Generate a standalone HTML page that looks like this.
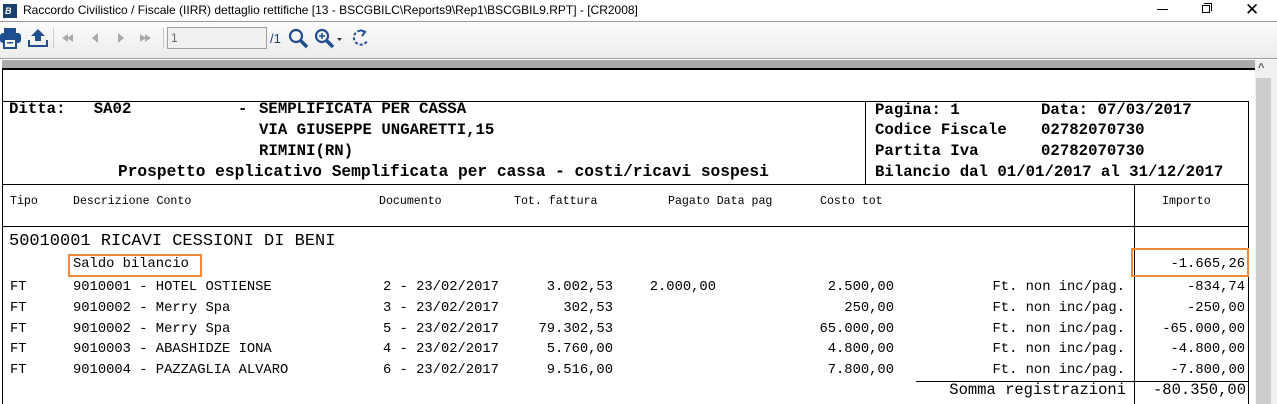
<!DOCTYPE html>
<html><head><meta charset="utf-8"><style>
*{margin:0;padding:0;box-sizing:border-box}
body{width:1277px;height:404px;overflow:hidden;background:#fff;position:relative;font-family:"Liberation Mono",monospace;color:#000}
.a{position:absolute;white-space:pre;line-height:16px}
.r{text-align:right}
.l{position:absolute;background:#000}
.t{font-size:13.8px}
.h{font-size:15.7px;font-weight:bold}
.c{font-size:11.6px}
</style></head><body>
<div style="position:absolute;left:0;top:0;width:1277px;height:21px;background:#fff"></div>
<div style="position:absolute;left:3px;top:4px;width:14px;height:14px;background:#1d3f6e;color:#fff;font:italic bold 9px 'Liberation Sans',sans-serif;line-height:14px;padding-left:2px">B</div>
<div class="a" style="left:23px;top:2px;font:12px 'Liberation Sans',sans-serif;line-height:16px">Raccordo Civilistico / Fiscale (IIRR) dettaglio rettifiche [13 - BSCGBILC\Reports9\Rep1\BSCGBIL9.RPT] - [CR2008]</div>
<div class="l" style="left:1157px;top:9px;width:11px;height:1px"></div>
<div style="position:absolute;left:1202px;top:5px;width:8px;height:8px;border:1px solid #000"></div>
<div style="position:absolute;left:1204px;top:3px;width:8px;height:8px;border-top:1px solid #000;border-right:1px solid #000"></div>
<div class="a" style="left:1245px;top:0px;font:17px 'Liberation Sans',sans-serif;line-height:20px">✕</div>
<div style="position:absolute;left:0;top:21px;width:1277px;height:38px;background:linear-gradient(#fbfbfb,#ececec);border-top:1px solid #9a9a9a;border-bottom:1px solid #9a9a9a"></div>
<svg style="position:absolute;left:0;top:26px" width="380" height="26">
<g fill="#1f4f8f"><rect x="4" y="2" width="12" height="5"/><rect x="0" y="7" width="21" height="10" rx="3"/><rect x="4" y="13" width="12" height="9" fill="#fff" stroke="#1f4f8f" stroke-width="2"/><rect x="7" y="16" width="6" height="1.5"/></g>
<g fill="#1f4f8f"><path d="M38 3 L45 10 H41 V15 H35 V10 H31 Z"/><path d="M28 14 V21 H48 V14 H46 V19 H30 V14 Z"/></g>
<rect x="53" y="2" width="1" height="20" fill="#ccc"/>
<g fill="#aaa"><path d="M62 12 L68 8 V16Z M67 12 L73 8 V16Z"/><path d="M92 12 L98 7 V17Z"/><path d="M118 7 L124 12 L118 17Z"/><path d="M140 8 L146 12 L140 16Z M145 8 L151 12 L145 16Z"/></g>
<rect x="163" y="2" width="1" height="20" fill="#ccc"/>
<rect x="167.5" y="1.5" width="99" height="21" fill="#f0f0f0" stroke="#a0a0a0"/>
<text x="171" y="16" font-family="Liberation Sans" font-size="12" fill="#666">1</text>
<text x="270" y="17" font-family="Liberation Sans" font-size="13" fill="#1f3f6f">/1</text>
<g stroke="#1f4f8f" fill="none" stroke-width="2.2"><circle cx="296" cy="10" r="6"/><path d="M300 14 L307 21" stroke-width="3.5"/><circle cx="322" cy="10" r="6"/><path d="M326 14 L333 21" stroke-width="3.5"/><path d="M319 10 H325 M322 7 V13" stroke-width="1.6"/></g>
<path d="M337 12 H342 L339.5 15Z" fill="#333"/>
<g stroke="#1f4f8f" fill="none" stroke-width="2"><path d="M365 6 A7 7 0 1 0 367 15" stroke-dasharray="3 2"/><path d="M360 4 L365 6 L362 10"/></g>
</svg>
<div style="position:absolute;left:2px;top:60px;width:1253px;height:10px;background:#ababab;border-bottom:2px solid #000"></div>
<div style="position:absolute;left:1255px;top:60px;width:22px;height:344px;background:#f0f0f0"></div>
<div style="position:absolute;left:1256px;top:78px;width:15px;height:326px;background:#cdcdcd"></div>
<div class="a" style="left:1258px;top:62px;font:bold 11px 'Liberation Sans',sans-serif;color:#555">^</div>
<div class="l" style="left:2px;top:70px;width:1px;height:334px"></div>
<div class="l" style="left:2px;top:101px;width:1247px;height:1px"></div>
<div class="l" style="left:1248px;top:101px;width:1px;height:303px"></div>
<div class="l" style="left:865px;top:101px;width:1px;height:83px"></div>
<div class="l" style="left:2px;top:184px;width:1247px;height:1px"></div>
<div class="l" style="left:2px;top:226px;width:1247px;height:1px"></div>
<div class="l" style="left:1134px;top:184px;width:1px;height:220px"></div>
<div class="l" style="left:916px;top:381px;width:333px;height:1px"></div>

<div class="a h" style="left:9px;top:101px">Ditta:   SA02</div>
<div class="a h" style="left:238px;top:101px">-</div>
<div class="a h" style="left:259px;top:101px">SEMPLIFICATA PER CASSA</div>
<div class="a h" style="left:259px;top:122px">VIA GIUSEPPE UNGARETTI,15</div>
<div class="a h" style="left:259px;top:143px">RIMINI(RN)</div>
<div class="a h" style="left:118px;top:164px;font-size:16.2px">Prospetto esplicativo Semplificata per cassa - costi/ricavi sospesi</div>
<div class="a h" style="left:875px;top:102px">Pagina: 1</div>
<div class="a h" style="left:1041px;top:102px">Data: 07/03/2017</div>
<div class="a h" style="left:875px;top:122px">Codice Fiscale</div>
<div class="a h" style="left:1041px;top:122px">02782070730</div>
<div class="a h" style="left:875px;top:143px">Partita Iva</div>
<div class="a h" style="left:1041px;top:143px">02782070730</div>
<div class="a h" style="left:875px;top:164px">Bilancio dal 01/01/2017 al 31/12/2017</div>

<div class="a c" style="left:10px;top:194px">Tipo</div>
<div class="a c" style="left:73px;top:194px">Descrizione Conto</div>
<div class="a c" style="left:379px;top:194px">Documento</div>
<div class="a c" style="left:514px;top:194px">Tot. fattura</div>
<div class="a c" style="left:668px;top:194px">Pagato Data pag</div>
<div class="a c" style="left:820px;top:194px">Costo tot</div>
<div class="a c" style="left:1162px;top:194px">Importo</div>

<div class="a" style="left:9px;top:233px;font-size:17px;line-height:18px">50010001 RICAVI CESSIONI DI BENI</div>
<div style="position:absolute;left:68px;top:254px;width:134px;height:23px;border:2px solid #f0883a"></div>
<div style="position:absolute;left:1131px;top:248px;width:118px;height:29px;border:2px solid #f0883a"></div>
<div class="a t" style="left:73px;top:257px">Saldo bilancio</div>
<div class="a t r" style="left:1000px;width:245px;top:257px">-1.665,26</div>

<div class="a t" style="left:10px;top:278px;line-height:20.8px">FT
FT
FT
FT
FT</div>
<div class="a t" style="left:73px;top:278px;line-height:20.8px">9010001 - HOTEL OSTIENSE
9010002 - Merry Spa
9010002 - Merry Spa
9010003 - ABASHIDZE IONA
9010004 - PAZZAGLIA ALVARO</div>
<div class="a t" style="left:383px;top:278px;line-height:20.8px">2 - 23/02/2017
3 - 23/02/2017
5 - 23/02/2017
4 - 23/02/2017
6 - 23/02/2017</div>
<div class="a t r" style="left:500px;width:113px;top:278px;line-height:20.8px">3.002,53
302,53
79.302,53
5.760,00
9.516,00</div>
<div class="a t r" style="left:600px;width:116px;top:278px;line-height:20.8px">2.000,00</div>
<div class="a t r" style="left:750px;width:144px;top:278px;line-height:20.8px">2.500,00
250,00
65.000,00
4.800,00
7.800,00</div>
<div class="a t r" style="left:900px;width:225px;top:278px;line-height:20.8px">Ft. non inc/pag.
Ft. non inc/pag.
Ft. non inc/pag.
Ft. non inc/pag.
Ft. non inc/pag.</div>
<div class="a t r" style="left:1000px;width:245px;top:278px;line-height:20.8px">-834,74
-250,00
-65.000,00
-4.800,00
-7.800,00</div>
<div class="a r" style="left:900px;width:226px;top:382px;font-size:15.5px">Somma registrazioni</div>
<div class="a r" style="left:1000px;width:246px;top:382px;font-size:15.5px">-80.350,00</div>
</body></html>
